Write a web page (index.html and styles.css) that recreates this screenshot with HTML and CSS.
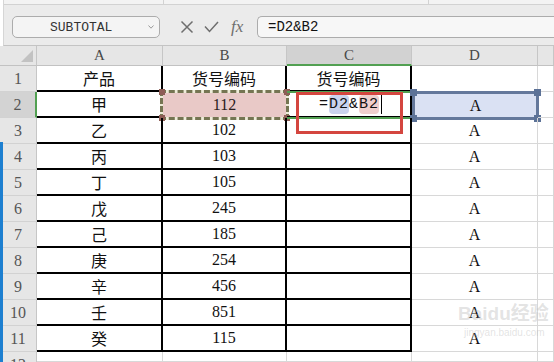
FILE: index.html
```html
<!DOCTYPE html>
<html lang="zh-CN">
<head>
	<meta charset="UTF-8">
	<title>货号编码</title>
	<link rel="stylesheet" href="styles.css">
</head>
<body>
	<div class="toolbar">
		<div class="strip">
			<div class="seg seg1"></div>
			<div class="seg seg2"></div>
			<div class="seg seg3"></div>
		</div>
		<div class="fbar">
			<div class="namebox">
				<span class="name">SUBTOTAL</span>
				<svg class="drop" width="6" height="4" viewBox="0 0 6 4"><path d="M0.5 0.5 L3 3.2 L5.5 0.5" fill="none" stroke="#9a9a9a" stroke-width="1"/></svg>
			</div>
			<div class="icons">
				<svg width="14" height="14" viewBox="0 0 14 14"><path d="M1.5 1.5 L12.5 12.5 M12.5 1.5 L1.5 12.5" stroke="#6e6e6e" stroke-width="1.5" fill="none"/></svg>
				<svg width="15" height="12" viewBox="0 0 15 12"><path d="M1 5.5 L5.5 10.5 L14 1" stroke="#6e6e6e" stroke-width="1.5" fill="none"/></svg>
				<span class="fx">fx</span>
			</div>
			<div class="finput">=D2&amp;B2</div>
		</div>
	</div>

	<div class="sheet">
		<!-- header -->
		<div class="ch corner"><span class="tri"></span></div>
		<div class="ch">A</div>
		<div class="ch">B</div>
		<div class="ch cur">C</div>
		<div class="ch">D</div>
		<div class="ch"></div>

		<div class="rh">1</div>
		<div class="c k zh">产品</div>
		<div class="c k zh">货号编码</div>
		<div class="c k zh">货号编码</div>
		<div class="c"></div>
		<div class="c"></div>

		<div class="rh cur">2</div>
		<div class="c k zh">甲</div>
		<div class="c k num">
			<div class="ants">112
				<span class="h tl"></span><span class="h tr"></span><span class="h bl"></span><span class="h br"></span>
			</div>
		</div>
		<div class="c k edit">
			<div class="active"></div>
			<div class="formula"><span>=</span><span class="ref rd">D2</span><span>&amp;</span><span class="ref rb">B2</span><span class="caret"></span></div>
		</div>
		<div class="c num">
			<div class="pick">A
				<span class="q tl"></span><span class="q tr"></span><span class="q bl"></span><span class="q br"></span>
			</div>
		</div>
		<div class="c"></div>

		<div class="rh">3</div>
		<div class="c k zh">乙</div>
		<div class="c k num">102</div>
		<div class="c k"></div>
		<div class="c num">A</div>
		<div class="c"></div>

		<div class="rh">4</div>
		<div class="c k zh">丙</div>
		<div class="c k num">103</div>
		<div class="c k"></div>
		<div class="c num">A</div>
		<div class="c"></div>

		<div class="rh">5</div>
		<div class="c k zh">丁</div>
		<div class="c k num">105</div>
		<div class="c k"></div>
		<div class="c num">A</div>
		<div class="c"></div>

		<div class="rh">6</div>
		<div class="c k zh">戊</div>
		<div class="c k num">245</div>
		<div class="c k"></div>
		<div class="c num">A</div>
		<div class="c"></div>

		<div class="rh">7</div>
		<div class="c k zh">己</div>
		<div class="c k num">185</div>
		<div class="c k"></div>
		<div class="c num">A</div>
		<div class="c"></div>

		<div class="rh">8</div>
		<div class="c k zh">庚</div>
		<div class="c k num">254</div>
		<div class="c k"></div>
		<div class="c num">A</div>
		<div class="c"></div>

		<div class="rh">9</div>
		<div class="c k zh">辛</div>
		<div class="c k num">456</div>
		<div class="c k"></div>
		<div class="c num">A</div>
		<div class="c"></div>

		<div class="rh">10</div>
		<div class="c k zh">壬</div>
		<div class="c k num">851</div>
		<div class="c k"></div>
		<div class="c num">A</div>
		<div class="c"></div>

		<div class="rh">11</div>
		<div class="c k zh">癸</div>
		<div class="c k num">115</div>
		<div class="c k"></div>
		<div class="c num">A</div>
		<div class="c"></div>

		<div class="rh last">12</div>
		<div class="c"></div>
		<div class="c"></div>
		<div class="c"></div>
		<div class="c"></div>
		<div class="c"></div>
	</div>

	<div class="redbox"></div>
	<div class="bluebar"></div>
	<div class="mark">
		<div class="mark-big">Baidu经验</div>
		<div class="mark-small">jingyan.baidu.com</div>
	</div>
</body>
</html>
```
FILE: styles.css
```css
body{
	margin: 0;
	width: 554px;
	height: 362px;
	overflow: hidden;
	position: relative;
	font-family: "Liberation Serif", serif;
	background: #fff;
}

/* formula bar */
.toolbar{
	height: 46px;
	box-sizing: border-box;
	background: #ebebeb;
	border-bottom: 1px solid #c4c4c4;
	border-left: 1px solid #d6d6d6;
	margin-left: 3px;
}
.strip{
	display: flex;
	height: 4px;
	background: #f3f3f3;
	border-bottom: 1px solid #d2d2d2;
}
.seg{
	border-right: 1px solid #d2d2d2;
}
.seg1{ width: 159px; }
.seg2{ width: 264px; }
.seg3{ flex: 1; border-right: none; }

.fbar{
	display: flex;
	align-items: center;
	margin-top: 11px;
	padding-left: 8px;
	height: 22px;
}
.namebox{
	width: 148px;
	height: 22px;
	box-sizing: border-box;
	border: 1px solid #acacac;
	border-radius: 5px;
	background: #f4f4f4;
	display: flex;
	align-items: center;
	position: relative;
}
.name{
	font-family: "Liberation Mono", monospace;
	font-size: 13px;
	color: #333;
	margin-left: 37px;
}
.drop{
	position: absolute;
	right: 5px;
	top: 8px;
}
.icons{
	display: flex;
	align-items: center;
	gap: 10px;
	margin-left: 20px;
	width: 77px;
}
.fx{
	font-style: italic;
	font-size: 17px;
	color: #6e6e6e;
	margin-left: 2px;
}
.finput{
	flex: 1;
	height: 22px;
	box-sizing: border-box;
	border: 1px solid #acacac;
	border-right: none;
	border-radius: 5px 0 0 5px;
	background: #f7f7f7;
	font-family: "Liberation Mono", monospace;
	font-size: 14px;
	color: #111;
	padding-left: 10px;
	line-height: 20px;
}

/* sheet grid */
.sheet{
	display: grid;
	grid-template-columns: 37px 126px 124px 125px 126px 16px;
	grid-template-rows: 20px repeat(11, 26px) 10px;
	height: 316px;
	overflow: hidden;
}
.ch, .rh, .c{
	box-sizing: border-box;
	display: flex;
	align-items: center;
	justify-content: center;
	position: relative;
}
.ch{
	background: #e6e6e6;
	border-right: 1px solid #c6c6c6;
	border-bottom: 1px solid #c2c2c2;
	color: #484848;
	font-size: 15px;
}
.ch.cur{
	background: #d2d2d2;
	border-bottom: 2px solid #52a052;
}
.corner .tri{
	position: absolute;
	right: 3px;
	bottom: 3px;
	width: 0;
	height: 0;
	border-left: 12px solid transparent;
	border-bottom: 12px solid #c2c2c2;
}
.rh{
	background: #e6e6e6;
	border-right: 1px solid #c6c6c6;
	border-bottom: 1px solid #d2d2d2;
	color: #555;
	font-size: 16px;
}
.rh.cur{
	background: #d3d3d3;
	border-right: 2px solid #52a052;
}
.rh.last{
	align-items: flex-start;
	padding-top: 4px;
	border-bottom: none;
	overflow: hidden;
}
.c{
	border-right: 1px solid #d8d8d8;
	border-bottom: 1px solid #d8d8d8;
	color: #111;
}
.k{
	border-right: 2px solid #000;
	border-bottom: 2px solid #000;
}
.zh{
	font-family: "Noto Sans CJK SC", sans-serif;
	font-size: 16px;
}
.num{
	font-size: 16px;
}

/* copy range on B2 */
.ants{
	position: absolute;
	left: -3px;
	right: -4px;
	top: -2px;
	bottom: -4px;
	border: 3px dashed #757552;
	background: linear-gradient(#e9c9c7, #e9c9c7) padding-box, linear-gradient(#eeecd9, #eeecd9) border-box;
	display: flex;
	align-items: center;
	justify-content: center;
	color: #2a1c1c;
}
.h{
	position: absolute;
	width: 6px;
	height: 6px;
	background: #8e5d55;
}
.ants .tl{ left: -4px; top: -4px; }
.ants .tr{ right: -4px; top: -4px; }
.ants .bl{ left: -4px; bottom: -4px; }
.ants .br{ right: -4px; bottom: -4px; }

/* editing C2 */
.edit{
	justify-content: flex-start;
}
.active{
	position: absolute;
	left: 0;
	right: 0;
	top: -1px;
	bottom: -3px;
	border-top: 2px solid #52a052;
	border-bottom: 2px solid #52a052;
}
.formula{
	display: flex;
	align-items: center;
	font-family: "Liberation Mono", monospace;
	font-size: 15px;
	letter-spacing: 1px;
	margin-left: 32px;
	color: #111;
}
.ref{
	border-radius: 4px;
	line-height: 19px;
}
.rd{ background: #cad3ee; }
.rb{ background: #efcfcd; }
.caret{
	width: 1px;
	height: 19px;
	background: #000;
	margin-left: 2px;
}

/* referenced D2 */
.pick{
	position: absolute;
	left: 0;
	right: -2px;
	top: -1px;
	bottom: -3px;
	border: 3px solid #64789b;
	background: #dae1f3;
	display: flex;
	align-items: center;
	justify-content: center;
}
.q{
	position: absolute;
	width: 7px;
	height: 7px;
	background: #5c7297;
}
.pick .tl{ left: -5px; top: -5px; }
.pick .tr{ right: -5px; top: -5px; }
.pick .bl{ left: -5px; bottom: -5px; }
.pick .br{ right: -5px; bottom: -5px; }

/* annotation + edges */
.redbox{
	position: absolute;
	left: 296px;
	top: 92px;
	width: 107px;
	height: 42px;
	box-sizing: border-box;
	border: 3px solid #d4463f;
}
.bluebar{
	position: absolute;
	left: 0;
	top: 142px;
	width: 3px;
	height: 220px;
	background: #1d7fd0;
}
.mark{
	position: absolute;
	left: 458px;
	top: 302px;
	width: 94px;
	color: rgba(185, 185, 185, 0.4);
	font-family: "Liberation Sans", "Noto Sans CJK SC", sans-serif;
	pointer-events: none;
}
.mark-big{
	font-size: 19px;
	font-weight: bold;
	line-height: 24px;
	white-space: nowrap;
}
.mark-small{
	font-size: 10px;
	line-height: 14px;
	margin-left: 6px;
	white-space: nowrap;
}
```
